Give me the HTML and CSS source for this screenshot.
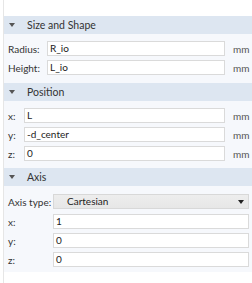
FILE: index.html
```html
<!DOCTYPE html>
<html lang="en">
<head>
    <meta charset="UTF-8">
    <title>Geometry Settings</title>
    <link rel="stylesheet" href="styles.css">
</head>
<body>
    <div class="panel">

        <!-- Size and Shape -->
        <div class="section-head"><span class="caret"></span>Size and Shape</div>
        <div class="section-body size">
            <label>Radius:</label><div class="field">R_io</div><span class="unit">mm</span>
            <label>Height:</label><div class="field">L_io</div><span class="unit">mm</span>
        </div>

        <!-- Position -->
        <div class="section-head"><span class="caret"></span>Position</div>
        <div class="section-body position">
            <label>x:</label><div class="field">L</div><span class="unit">mm</span>
            <label>y:</label><div class="field">-d_center</div><span class="unit">mm</span>
            <label>z:</label><div class="field">0</div><span class="unit">mm</span>
        </div>

        <!-- Axis -->
        <div class="section-head"><span class="caret"></span>Axis</div>
        <div class="section-body axis">
            <label>Axis type:</label>
            <div class="select">Cartesian<span class="select-arrow"></span></div>
            <label>x:</label><div class="field">1</div>
            <label>y:</label><div class="field">0</div>
            <label>z:</label><div class="field">0</div>
        </div>

    </div>
</body>
</html>
```

FILE: styles.css
```css
body {
    margin: 0;
    background-color: #ffffff;
    font-family: Lato, "Open Sans", sans-serif;
    font-size: 10px;
    color: #333;
}
.panel {
    margin-left: 3px;
    padding-top: 16px;
    border-left: 1px solid #e6e6e6;
    min-height: 267px;
}
.section-head {
    height: 18px;
    background-color: #dde6f1;
    display: flex;
    align-items: center;
    padding-left: 4px;
    font-size: 10.5px;
    color: #333;
}
.caret {
    width: 0;
    height: 0;
    border-left: 3px solid transparent;
    border-right: 3px solid transparent;
    border-top: 4px solid #555;
    margin-right: 12px;
    margin-left: 1px;
}
.section-body {
    background-color: #f6f8fc;
    display: grid;
    row-gap: 4px;
    align-items: center;
    padding: 7px 3px 8px 4px;
}
.size {
    grid-template-columns: 39px 1fr 24px;
}
.position {
    grid-template-columns: 16px 1fr 24px;
    padding-bottom: 7px;
}
.axis {
    grid-template-columns: 45px 1fr;
    padding-top: 8px;
    padding-bottom: 5px;
}
label {
    color: #333;
    white-space: nowrap;
}
.field {
    height: 13px;
    line-height: 13px;
    background-color: #fff;
    border: 1px solid #dadada;
    padding-left: 2px;
    color: #222;
}
.unit {
    padding-left: 8px;
    color: #555;
    white-space: nowrap;
}
.select {
    height: 13px;
    line-height: 13px;
    border: 1px solid #d8d8d8;
    background: linear-gradient(#ededed, #e7e7e7);
    padding-left: 13px;
    display: flex;
    align-items: center;
    justify-content: space-between;
    color: #222;
}
.select-arrow {
    width: 0;
    height: 0;
    border-left: 3px solid transparent;
    border-right: 3px solid transparent;
    border-top: 4px solid #222;
    margin-right: 4px;
}
.axis .select {
    margin-bottom: 1px;
}
```
